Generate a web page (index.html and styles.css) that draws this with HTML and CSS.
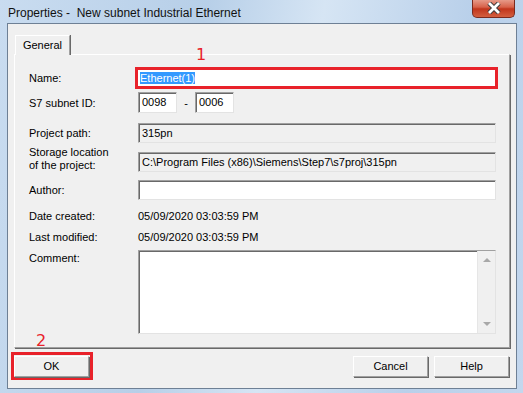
FILE: index.html
```html
<!DOCTYPE html>
<html lang="en">
<head>
  <meta charset="UTF-8" />
  <title>Properties - New subnet Industrial Ethernet</title>
  <link rel="stylesheet" href="styles.css">
</head>
<body>
  <div class="window">
    <div class="titlebar">
      <span class="title">Properties -&nbsp; New subnet Industrial Ethernet</span>
      <div class="close">
        <svg width="20" height="12" viewBox="0 0 20 12">
          <path d="M5 1 L15 11 M15 1 L5 11" stroke="#3a3a3a" stroke-width="4.6" />
          <path d="M5 1 L15 11 M15 1 L5 11" stroke="#ffffff" stroke-width="2.8" />
        </svg>
      </div>
    </div>
    <div class="client">
      <div class="tabs">
        <div class="tab">General</div>
      </div>
      <div class="panel">
        <span class="mark mark-1">1</span>
        <div class="row row-name">
          <div class="label">Name:</div>
          <div class="field name-field"><span class="selected">Ethernet(1)</span></div>
        </div>
        <div class="row row-id">
          <div class="label">S7 subnet ID:</div>
          <div class="field small">0098</div>
          <span class="dash">-</span>
          <div class="field small">0006</div>
        </div>
        <div class="row row-path">
          <div class="label">Project path:</div>
          <div class="field readonly">315pn</div>
        </div>
        <div class="row row-store">
          <div class="label two">Storage location<br>of the project:</div>
          <div class="field readonly">C:\Program Files (x86)\Siemens\Step7\s7proj\315pn</div>
        </div>
        <div class="row row-author">
          <div class="label">Author:</div>
          <div class="field"></div>
        </div>
        <div class="row row-date">
          <div class="label">Date created:</div>
          <div class="value">05/09/2020 03:03:59 PM</div>
        </div>
        <div class="row row-mod">
          <div class="label">Last modified:</div>
          <div class="value">05/09/2020 03:03:59 PM</div>
        </div>
        <div class="row row-comment">
          <div class="label">Comment:</div>
          <div class="field textarea">
            <div class="scrollbar">
              <span class="arrow up"></span>
              <span class="arrow down"></span>
            </div>
          </div>
        </div>
      </div>
      <div class="buttons">
        <div class="ok-wrap">
          <span class="mark mark-2">2</span>
          <div class="button ok">OK</div>
        </div>
        <div class="spacer"></div>
        <div class="button">Cancel</div>
        <div class="button">Help</div>
      </div>
    </div>
  </div>
</body>
</html>
```

FILE: styles.css
```css
body {
  margin: 0;
  font-family: "Liberation Sans", Arial, sans-serif;
  font-size: 11px;
  color: #000;
  overflow: hidden;
}
.window {
  width: 523px;
  height: 393px;
  box-sizing: border-box;
  padding: 0 6px 4px 7px;
  background: linear-gradient(100deg, #c9dcf0 0%, #b7cfe8 35%, #d6e5f4 55%, #b9d0ea 80%, #c3d7ee 100%);
  display: flex;
  flex-direction: column;
}
/* title bar */
.titlebar {
  height: 27px;
  display: flex;
  align-items: flex-start;
  position: relative;
}
.title {
  font-family: "Liberation Sans", Arial, sans-serif;
  font-size: 12px;
  margin-top: 6px;
  margin-left: 1px;
  color: #111;
}
.close {
  position: absolute;
  right: 2px;
  top: -1px;
  width: 43px;
  height: 19px;
  border: 1px solid #7a2a1e;
  border-top: none;
  border-radius: 0 0 5px 5px;
  background: linear-gradient(#e8a191 0%, #d7624a 45%, #c1351c 55%, #d35f3f 100%);
  display: flex;
  align-items: center;
  justify-content: center;
  box-sizing: border-box;
}
/* client area */
.client {
  flex: 1;
  background: #f0f0f0;
  border: 1px solid #6e8095;
  padding: 11px 6px 8px 6px;
  display: flex;
  flex-direction: column;
}
.tabs {
  display: flex;
  height: 19px;
  padding-left: 1px;
}
.tab {
  width: 55px;
  height: 20px;
  box-sizing: border-box;
  border: 1px solid #fff;
  border-right: 1px solid #a0a0a0;
  box-shadow: 1px 0 0 #696969;
  border-bottom: none;
  text-align: center;
  line-height: 18px;
  background: #f0f0f0;
  position: relative;
  z-index: 1;
}
.panel {
  position: relative;
  height: 294px;
  border: 1px solid;
  border-color: #fff #a0a0a0 #a0a0a0 #fff;
  box-shadow: 1px 1px 0 #696969;
  padding: 12px 0 0 14px;
  box-sizing: border-box;
  width: 496px;
}
.mark {
  position: absolute;
  color: #e8222a;
  font-size: 16px;
  font-family: "DejaVu Sans", sans-serif;
}
.mark-1 {
  left: 181px;
  top: -10px;
}
.row {
  display: flex;
  align-items: center;
}
.label {
  width: 109px;
  flex: none;
}
.field {
  width: 358px;
  height: 20px;
  box-sizing: border-box;
  background: #fff;
  border: 1px solid;
  border-color: #a0a0a0 #e3e3e3 #e3e3e3 #a0a0a0;
  box-shadow: inset 1px 1px 0 #696969;
  padding: 2px 0 0 3px;
  line-height: 15px;
  white-space: nowrap;
}
.readonly {
  background: #f0f0f0;
}
.name-field {
  width: 363px;
  height: 22px;
  margin-left: -3px;
  border: 3px solid #e8222a;
  box-shadow: none;
  padding: 1px 0 0 2px;
}
.selected {
  background: #3399ff;
  color: #fff;
}
.row-id {
  margin-top: 3px;
}
.small {
  width: 39px;
  height: 21px;
}
.dash {
  width: 18px;
  text-align: center;
}
.row-path {
  margin-top: 10px;
}
.row-store {
  margin-top: 9px;
}
.label.two {
  line-height: 13px;
  margin-top: -7px;
}
.row-author {
  margin-top: 8px;
}
.row-date {
  margin-top: 9px;
  height: 14px;
}
.row-mod {
  margin-top: 7px;
  height: 14px;
}
.row-comment {
  margin-top: 6px;
  align-items: flex-start;
}
.row-comment .label {
  margin-top: 2px;
}
.textarea {
  height: 84px;
  padding: 0;
  display: flex;
  justify-content: flex-end;
}
.scrollbar {
  width: 17px;
  background: #f0f0f0;
  border-left: 1px solid #e6e6e6;
  position: relative;
}
.arrow {
  position: absolute;
  left: 5px;
  width: 0;
  height: 0;
  border-left: 4px solid transparent;
  border-right: 4px solid transparent;
}
.arrow.up {
  top: 7px;
  border-bottom: 4px solid #a8a8a8;
}
.arrow.down {
  bottom: 7px;
  border-top: 4px solid #a8a8a8;
}
/* bottom buttons */
.buttons {
  display: flex;
  align-items: center;
  margin-top: 4px;
  gap: 6px;
}
.spacer {
  flex: 1;
}
.ok-wrap {
  position: relative;
  border: 3px solid #e8222a;
  padding: 1px 1px 0 0;
  margin-left: -3px;
}
.mark-2 {
  left: 22px;
  top: -24px;
}
.button {
  width: 75px;
  height: 21px;
  box-sizing: border-box;
  border: 1px solid;
  border-color: #fff #a0a0a0 #a0a0a0 #fff;
  box-shadow: 1px 1px 0 #696969;
  background: #f0f0f0;
  text-align: center;
  line-height: 19px;
}
.buttons > .button:last-child {
  margin-right: 1px;
}
```
